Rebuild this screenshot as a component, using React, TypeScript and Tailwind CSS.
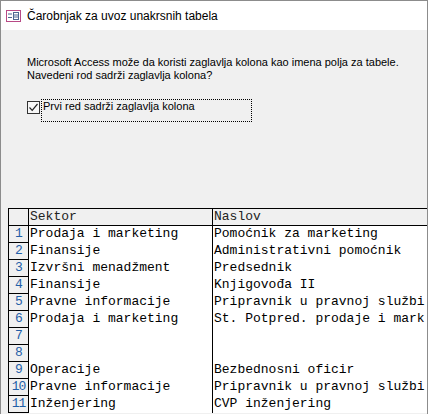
import React from "react";

const rows: [string, string, string][] = [
  ["1", "Prodaja i marketing", "Pomoćnik za marketing"],
  ["2", "Finansije", "Administrativni pomoćnik"],
  ["3", "Izvršni menadžment", "Predsednik"],
  ["4", "Finansije", "Knjigovođa II"],
  ["5", "Pravne informacije", "Pripravnik u pravnoj službi"],
  ["6", "Prodaja i marketing", "St. Potpred. prodaje i mark"],
  ["7", "", ""],
  ["8", "", ""],
  ["9", "Operacije", "Bezbednosni oficir"],
  ["10", "Pravne informacije", "Pripravnik u pravnoj službi"],
  ["11", "Inženjering", "CVP inženjering"],
];

function FormIcon() {
  return (
    <svg width="15" height="12" viewBox="0 0 15 12" className="shrink-0">
      <rect x="0.5" y="0.5" width="14" height="11" fill="#ffffff" stroke="#b84a86" />
      <line x1="2" y1="4" x2="6" y2="4" stroke="#4c6891" />
      <line x1="2" y1="7.5" x2="6" y2="7.5" stroke="#4c6891" />
      <rect x="7.5" y="2.5" width="5" height="7" fill="none" stroke="#4c6891" />
      <line x1="8" y1="5" x2="12" y2="5" stroke="#4c6891" />
      <line x1="8" y1="7" x2="12" y2="7" stroke="#4c6891" />
    </svg>
  );
}

export default function App() {
  return (
    <div
      className="w-[428px] h-[414px] flex flex-col border-l border-t border-r border-[#8c8c8c] overflow-hidden bg-[#f0f0f0]"
      style={{ fontFamily: '"Liberation Sans", Arial, sans-serif' }}
    >
      <div className="h-[29px] shrink-0 bg-white flex items-center pl-[5px] gap-[6px]">
        <FormIcon />
        <span className="text-[12px] text-black leading-none">Čarobnjak za uvoz unakrsnih tabela</span>
      </div>
      <div className="flex-1 flex flex-col overflow-hidden">
        <p className="ml-[26px] mt-[26px] text-[11px] leading-[13px] text-black">
          Microsoft Access može da koristi zaglavlja kolona kao imena polja za tabele.
          <br />
          Navedeni rod sadrži zaglavlja kolona?
        </p>
        <div className="ml-[26px] mt-[17px] flex items-start">
          <div className="w-[13px] h-[13px] mt-[2px] border border-[#333333] bg-[#f7f7f7] flex items-center justify-center shrink-0">
            <svg width="11" height="11" viewBox="0 0 11 11">
              <polyline points="1.5,5.5 4.2,8.3 9.5,2" fill="none" stroke="#222222" strokeWidth="1.2" />
            </svg>
          </div>
          <div className="ml-[1px] w-[211px] h-[23px] border border-dotted border-black pl-[1px] text-[11px] leading-[13px] text-black">
            Prvi red sadrži zaglavlja kolona
          </div>
        </div>
        <div
          className="mt-[86px] ml-[7px] flex flex-col text-[13px] leading-[16px]"
          style={{ fontFamily: '"Liberation Mono", "DejaVu Sans Mono", monospace' }}
        >
          <div className="flex h-[18px] border-t border-b border-black bg-[#f0f0f0] whitespace-nowrap">
            <div className="w-[21px] shrink-0 border-l border-r border-black" />
            <div className="w-[184px] shrink-0 border-r border-black pl-[1px] text-[#222222]">Sektor</div>
            <div className="flex-1 pl-[1px] text-[#222222]">Naslov</div>
          </div>
          {rows.map(([n, a, b]) => (
            <div key={n} className="flex h-[17px] whitespace-nowrap">
              <div className="w-[21px] shrink-0 border-l border-r border-b border-black bg-[#f0f0f0] text-center text-[#1f5fa8] tracking-[-1px]">
                {n}
              </div>
              <div className="w-[184px] shrink-0 border-r border-black bg-white pl-[1px] text-black overflow-hidden">
                {a}
              </div>
              <div className="flex-1 bg-white pl-[1px] text-black overflow-hidden">{b}</div>
            </div>
          ))}
        </div>
      </div>
    </div>
  );
}
